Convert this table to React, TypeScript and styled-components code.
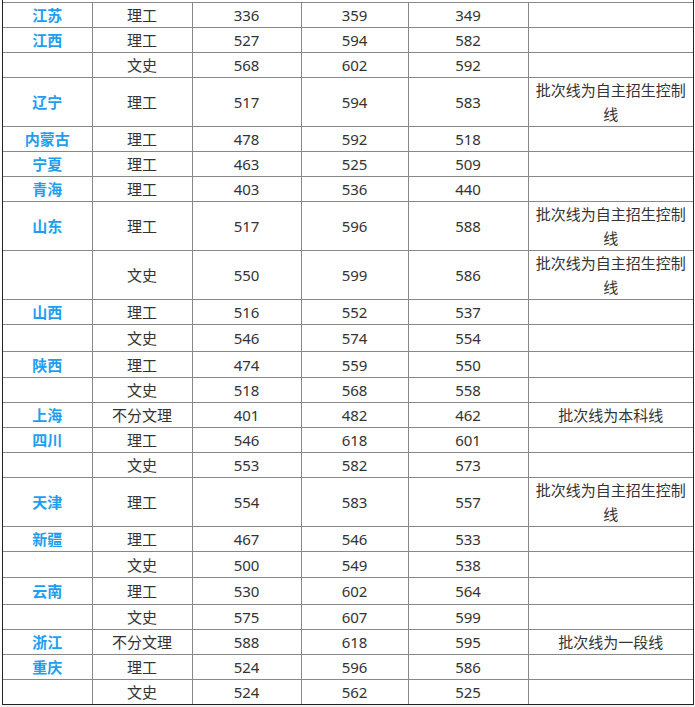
import styled, { createGlobalStyle } from "styled-components";

type Row = {
  province?: string;
  kind: string;
  a: string;
  b: string;
  c: string;
  note?: string;
  h: number;
};

const CONTROL = "批次线为自主招生控制线";

const rows: Row[] = [
  { province: "江苏", kind: "理工", a: "336", b: "359", c: "349", h: 25 },
  { province: "江西", kind: "理工", a: "527", b: "594", c: "582", h: 25 },
  { kind: "文史", a: "568", b: "602", c: "592", h: 25 },
  { province: "辽宁", kind: "理工", a: "517", b: "594", c: "583", note: CONTROL, h: 49 },
  { province: "内蒙古", kind: "理工", a: "478", b: "592", c: "518", h: 25 },
  { province: "宁夏", kind: "理工", a: "463", b: "525", c: "509", h: 25 },
  { province: "青海", kind: "理工", a: "403", b: "536", c: "440", h: 25 },
  { province: "山东", kind: "理工", a: "517", b: "596", c: "588", note: CONTROL, h: 49 },
  { kind: "文史", a: "550", b: "599", c: "586", note: CONTROL, h: 49 },
  { province: "山西", kind: "理工", a: "516", b: "552", c: "537", h: 25 },
  { kind: "文史", a: "546", b: "574", c: "554", h: 27 },
  { province: "陕西", kind: "理工", a: "474", b: "559", c: "550", h: 26 },
  { kind: "文史", a: "518", b: "568", c: "558", h: 25 },
  { province: "上海", kind: "不分文理", a: "401", b: "482", c: "462", note: "批次线为本科线", h: 25 },
  { province: "四川", kind: "理工", a: "546", b: "618", c: "601", h: 25 },
  { kind: "文史", a: "553", b: "582", c: "573", h: 25 },
  { province: "天津", kind: "理工", a: "554", b: "583", c: "557", note: CONTROL, h: 49 },
  { province: "新疆", kind: "理工", a: "467", b: "546", c: "533", h: 25 },
  { kind: "文史", a: "500", b: "549", c: "538", h: 26 },
  { province: "云南", kind: "理工", a: "530", b: "602", c: "564", h: 27 },
  { kind: "文史", a: "575", b: "607", c: "599", h: 25 },
  { province: "浙江", kind: "不分文理", a: "588", b: "618", c: "595", note: "批次线为一段线", h: 25 },
  { province: "重庆", kind: "理工", a: "524", b: "596", c: "586", h: 25 },
  { kind: "文史", a: "524", b: "562", c: "525", h: 24 },
];

const GlobalStyle = createGlobalStyle`
  html, body {
    margin: 0;
    padding: 0;
    background: #fff;
  }
  body {
    font-family: "Noto Sans", "Noto Sans CJK SC", sans-serif;
    color: #333;
  }
`;

export default function App() {
  return (
    <Page>
      <GlobalStyle />
      <Frame>
        <ScoreTable>
          <colgroup>
            <col style={{ width: 89 }} />
            <col style={{ width: 100 }} />
            <col style={{ width: 109 }} />
            <col style={{ width: 107 }} />
            <col style={{ width: 120 }} />
            <col />
          </colgroup>
          <tbody>
            {rows.map((r, i) => (
              <Tr key={i} $h={r.h}>
                <ProvinceCell>{r.province ?? ""}</ProvinceCell>
                <Cell>{r.kind}</Cell>
                <Cell>{r.a}</Cell>
                <Cell>{r.b}</Cell>
                <Cell>{r.c}</Cell>
                <NoteCell>{r.note ?? ""}</NoteCell>
              </Tr>
            ))}
          </tbody>
        </ScoreTable>
      </Frame>
      <Footer />
    </Page>
  );
}

const Page = styled.div`
  width: 695px;
  height: 707px;
  overflow: hidden;
  display: flex;
  flex-direction: column;
  background: #fff;
`;

const Frame = styled.div`
  width: 690px;
  margin-left: 2px;
  padding-top: 2px;
  border-left: 1px solid #222;
  border-right: 1px solid #222;
  border-bottom: 1px solid #222;
`;

const ScoreTable = styled.table`
  width: 100%;
  border-collapse: collapse;
  table-layout: fixed;
  font-size: 15px;
  line-height: 24px;

  tr:first-child td {
    border-top: 1px solid #888;
  }
  tr:last-child td {
    border-bottom: none;
  }
  td:first-child {
    border-left: none;
  }
  td:last-child {
    border-right: none;
  }
`;

const Tr = styled.tr<{ $h: number }>`
  height: ${(p) => p.$h}px;
`;

const Cell = styled.td`
  border: 1px solid #888;
  padding: 0 5px;
  text-align: center;
  vertical-align: middle;
  color: #333;
`;

const ProvinceCell = styled(Cell)`
  color: #1e9eef;
  font-weight: bold;
`;

const NoteCell = styled(Cell)`
  padding: 0 6px;
  word-break: break-all;
`;

const Footer = styled.div`
  flex: 1;
  background: #f2f2f2;
`;
